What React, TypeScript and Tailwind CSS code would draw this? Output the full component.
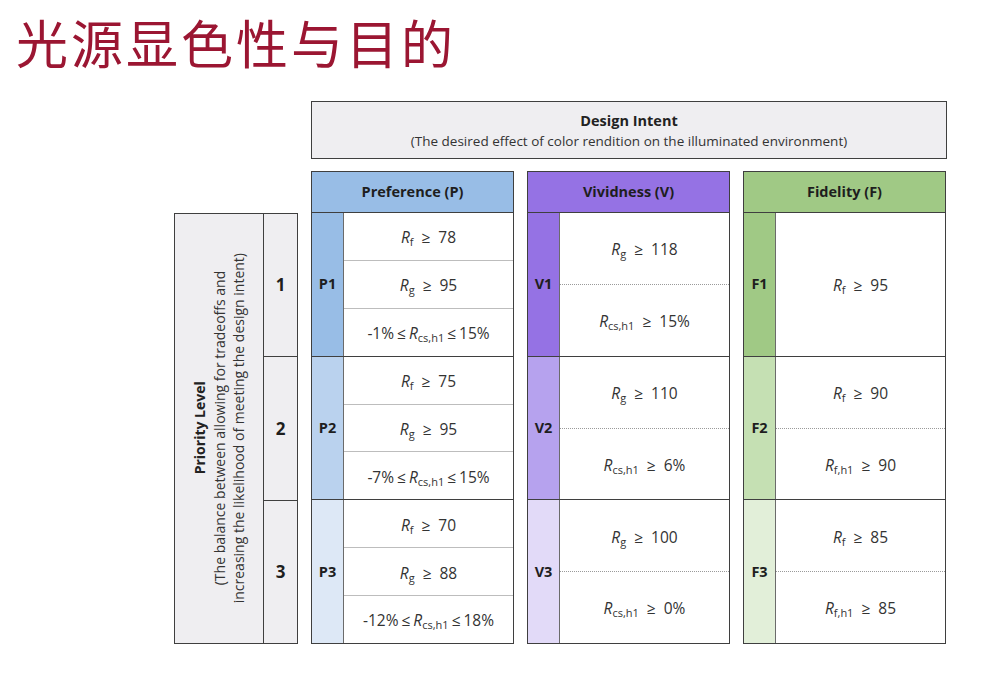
import React from "react";

type Level = {
  label: string;
  strip: string;
  cells: React.ReactNode[];
};

type Intent = {
  title: string;
  header: string;
  dotted: boolean;
  levels: Level[];
};

function R({ sub }: { sub: string }) {
  return (
    <span className="whitespace-nowrap">
      <i>R</i>
      <span className="relative top-[3px] text-[11px]">{sub}</span>
    </span>
  );
}

function Ge() {
  return <span className="mx-[8px]">≥</span>;
}

function Le() {
  return <span className="mx-[3px]">≤</span>;
}

const ge = (sub: string, value: string) => (
  <>
    <R sub={sub} />
    <Ge />
    {value}
  </>
);

const range = (low: string, high: string) => (
  <>
    {low}
    <Le />
    <R sub="cs,h1" />
    <Le />
    {high}
  </>
);

const intents: Intent[] = [
  {
    title: "Preference (P)",
    header: "bg-[#98bde6]",
    dotted: false,
    levels: [
      { label: "P1", strip: "bg-[#98bde6]", cells: [ge("f", "78"), ge("g", "95"), range("-1%", "15%")] },
      { label: "P2", strip: "bg-[#bad2ee]", cells: [ge("f", "75"), ge("g", "95"), range("-7%", "15%")] },
      { label: "P3", strip: "bg-[#dde8f6]", cells: [ge("f", "70"), ge("g", "88"), range("-12%", "18%")] },
    ],
  },
  {
    title: "Vividness (V)",
    header: "bg-[#9572e4]",
    dotted: true,
    levels: [
      { label: "V1", strip: "bg-[#9572e4]", cells: [ge("g", "118"), ge("cs,h1", "15%")] },
      { label: "V2", strip: "bg-[#b6a2ee]", cells: [ge("g", "110"), ge("cs,h1", "6%")] },
      { label: "V3", strip: "bg-[#e2daf8]", cells: [ge("g", "100"), ge("cs,h1", "0%")] },
    ],
  },
  {
    title: "Fidelity (F)",
    header: "bg-[#a0c985]",
    dotted: true,
    levels: [
      { label: "F1", strip: "bg-[#a0c985]", cells: [ge("f", "95")] },
      { label: "F2", strip: "bg-[#c5e0b3]", cells: [ge("f", "90"), ge("f,h1", "90")] },
      { label: "F3", strip: "bg-[#e2efd9]", cells: [ge("f", "85"), ge("f,h1", "85")] },
    ],
  },
];

function IntentColumn({ intent }: { intent: Intent }) {
  return (
    <div className="flex h-[473px] w-[203px] flex-col border-[1.5px] border-[#3f3f3f] bg-white">
      <div
        className={`flex h-[41px] shrink-0 items-center justify-center border-b-[1.5px] border-[#3f3f3f] text-[14.5px] font-bold text-[#1e1e1e] ${intent.header}`}
      >
        {intent.title}
      </div>
      {intent.levels.map((level, i) => (
        <div key={level.label} className={`flex flex-1 ${i > 0 ? "border-t-[1.5px] border-[#3f3f3f]" : ""}`}>
          <div
            className={`flex w-[32px] shrink-0 items-center justify-center border-r border-[#6b6b6b] text-[14.5px] font-bold text-[#1e1e1e] ${level.strip}`}
          >
            {level.label}
          </div>
          <div className="flex flex-1 flex-col">
            {level.cells.map((cell, j) => (
              <div
                key={j}
                className={`flex flex-1 items-center justify-center pt-[3px] text-[15.5px] text-[#333] ${
                  j > 0 ? (intent.dotted ? "border-t border-dotted border-[#9a9a9a]" : "border-t border-[#bdbdbd]") : ""
                }`}
              >
                <span>{cell}</span>
              </div>
            ))}
          </div>
        </div>
      ))}
    </div>
  );
}

export default function App() {
  return (
    <div className="h-[676px] w-[1006px] overflow-hidden bg-white font-['Open_Sans','Liberation_Sans',sans-serif]">
      <h1 className="pl-[16px] pt-[16px] font-['Noto_Sans_CJK_SC',sans-serif] text-[52px] font-normal leading-none tracking-[3px] text-[#9b1632]">
        光源显色性与目的
      </h1>

      <div className="mt-[33px] flex pl-[174px]">
        <div className="mt-[112px] flex h-[431px] w-[124px] border-[1.5px] border-[#3f3f3f] bg-[#efeef1]">
          <div className="flex flex-1 items-center justify-center">
            <div className="rotate-180 text-center text-[14px] leading-[19.5px] text-[#333] [writing-mode:vertical-rl]">
              <div className="font-bold text-[#222]">Priority Level</div>
              <div>(The balance between allowing for tradeoffs and</div>
              <div>increasing the likelihood of meeting the design intent)</div>
            </div>
          </div>
          <div className="flex w-[34px] flex-col border-l-[1.5px] border-[#3f3f3f]">
            {["1", "2", "3"].map((n, i) => (
              <div
                key={n}
                className={`flex flex-1 items-center justify-center text-[17px] font-bold text-[#1e1e1e] ${
                  i > 0 ? "border-t-[1.5px] border-[#3f3f3f]" : ""
                }`}
              >
                {n}
              </div>
            ))}
          </div>
        </div>

        <div className="ml-[13px] w-[636px]">
          <div className="flex h-[58px] flex-col items-center justify-center border-[1.5px] border-[#3f3f3f] bg-[#efeef1] pt-[2px] text-[#222]">
            <div className="text-[14.5px] font-bold leading-[20px]">Design Intent</div>
            <div className="text-[13.5px] leading-[20px] text-[#333]">
              (The desired effect of color rendition on the illuminated environment)
            </div>
          </div>
          <div className="mt-[12px] flex gap-[13px]">
            {intents.map((intent) => (
              <IntentColumn key={intent.title} intent={intent} />
            ))}
          </div>
        </div>
      </div>
    </div>
  );
}
